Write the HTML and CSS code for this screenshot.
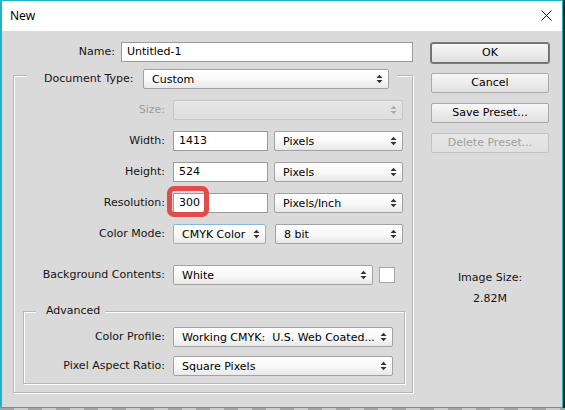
FILE: index.html
```html
<!DOCTYPE html>
<html>
<head>
<meta charset="utf-8">
<link rel="stylesheet" href="styles.css">
</head>
<body>
<div class="screen">
  <div class="window">
    <div class="titlebar">
      <span class="title">New</span>
      <svg class="close" width="11" height="11" viewBox="0 0 11 11"><path d="M0.5 0.5 L10.5 10.5 M10.5 0.5 L0.5 10.5" stroke="#111" stroke-width="1" fill="none"/></svg>
    </div>
    <div class="dialog">
      <div class="form">
        <div class="name-row">
          <span class="lbl name-lbl">Name:</span>
          <div class="field name-field">Untitled-1</div>
        </div>
        <div class="group outer">
          <div class="group-head doc-head">
            <span class="lbl doc-lbl">Document Type:</span>
            <div class="select doc-select"><span>Custom</span><svg class="arr" width="7" height="10" viewBox="0 0 7 10"><path d="M0.5 4 L3.5 0.8 L6.5 4 Z M0.5 6 L3.5 9.2 L6.5 6 Z" fill="#333"/></svg></div>
          </div>
          <div class="rows">
            <div class="row">
              <span class="lbl rl disabled">Size:</span>
              <div class="select off w230"><span></span><svg class="arr" width="7" height="10" viewBox="0 0 7 10"><path d="M0.5 4 L3.5 0.8 L6.5 4 Z M0.5 6 L3.5 9.2 L6.5 6 Z" fill="#aaa"/></svg></div>
            </div>
            <div class="row">
              <span class="lbl rl">Width:</span>
              <div class="field w95">1413</div>
              <div class="select w129"><span>Pixels</span><svg class="arr" width="7" height="10" viewBox="0 0 7 10"><path d="M0.5 4 L3.5 0.8 L6.5 4 Z M0.5 6 L3.5 9.2 L6.5 6 Z" fill="#333"/></svg></div>
            </div>
            <div class="row">
              <span class="lbl rl">Height:</span>
              <div class="field w95">524</div>
              <div class="select w129"><span>Pixels</span><svg class="arr" width="7" height="10" viewBox="0 0 7 10"><path d="M0.5 4 L3.5 0.8 L6.5 4 Z M0.5 6 L3.5 9.2 L6.5 6 Z" fill="#333"/></svg></div>
            </div>
            <div class="row">
              <span class="lbl rl">Resolution:</span>
              <div class="field w95 marked">300<span class="mark"></span></div>
              <div class="select w129"><span>Pixels/Inch</span><svg class="arr" width="7" height="10" viewBox="0 0 7 10"><path d="M0.5 4 L3.5 0.8 L6.5 4 Z M0.5 6 L3.5 9.2 L6.5 6 Z" fill="#333"/></svg></div>
            </div>
            <div class="row">
              <span class="lbl rl">Color Mode:</span>
              <div class="select focus w93"><span>CMYK Color</span><svg class="arr" width="7" height="10" viewBox="0 0 7 10"><path d="M0.5 4 L3.5 0.8 L6.5 4 Z M0.5 6 L3.5 9.2 L6.5 6 Z" fill="#333"/></svg></div>
              <div class="select w128 gap9"><span>8 bit</span><svg class="arr" width="7" height="10" viewBox="0 0 7 10"><path d="M0.5 4 L3.5 0.8 L6.5 4 Z M0.5 6 L3.5 9.2 L6.5 6 Z" fill="#333"/></svg></div>
            </div>
            <div class="row bg-row">
              <span class="lbl rl">Background Contents:</span>
              <div class="select w200"><span>White</span><svg class="arr" width="7" height="10" viewBox="0 0 7 10"><path d="M0.5 4 L3.5 0.8 L6.5 4 Z M0.5 6 L3.5 9.2 L6.5 6 Z" fill="#333"/></svg></div>
              <div class="swatch"></div>
            </div>
          </div>
          <div class="group adv">
            <div class="group-head adv-head"><span class="lbl">Advanced</span></div>
            <div class="rows adv-rows">
              <div class="row">
                <span class="lbl rl2">Color Profile:</span>
                <div class="select w220"><span>Working CMYK:&nbsp; U.S. Web Coated...</span><svg class="arr" width="7" height="10" viewBox="0 0 7 10"><path d="M0.5 4 L3.5 0.8 L6.5 4 Z M0.5 6 L3.5 9.2 L6.5 6 Z" fill="#333"/></svg></div>
              </div>
              <div class="row">
                <span class="lbl rl2">Pixel Aspect Ratio:</span>
                <div class="select w220"><span>Square Pixels</span><svg class="arr" width="7" height="10" viewBox="0 0 7 10"><path d="M0.5 4 L3.5 0.8 L6.5 4 Z M0.5 6 L3.5 9.2 L6.5 6 Z" fill="#333"/></svg></div>
              </div>
            </div>
          </div>
        </div>
      </div>
      <div class="side">
        <div class="btn default">OK</div>
        <div class="btn">Cancel</div>
        <div class="btn">Save Preset...</div>
        <div class="btn disabled-btn">Delete Preset...</div>
        <div class="info">
          <div class="info-line">Image Size:</div>
          <div class="info-line">2.82M</div>
        </div>
      </div>
    </div>
  </div>
  <div class="desk-right"></div>
</div>
<div class="desk-strip"></div>
</body>
</html>
```
FILE: styles.css
```css
html, body {
  margin: 0;
  padding: 0;
  background: #1e1e1e;
}
body {
  width: 565px;
  height: 410px;
  overflow: hidden;
  font-family: "DejaVu Sans", sans-serif;
  font-size: 11px;
  color: #141414;
}
.screen {
  display: flex;
}
.window {
  width: 563px;
  height: 408px;
  box-sizing: border-box;
  border: 1px solid #1fb3c3;
  border-left-width: 2px;
  background: #dadada;
  display: flex;
  flex-direction: column;
}
.desk-right {
  width: 2px;
  background: #1e1e1e;
}
.desk-strip {
  height: 2px;
  background: repeating-linear-gradient(90deg, #a3a3a3 0 14px, #cbcbcb 14px 28px);
}
.titlebar {
  height: 30px;
  background: #fff;
  display: flex;
  align-items: center;
  justify-content: space-between;
  padding: 0 10px 0 8px;
}
.title {
  font-family: "Noto Sans", sans-serif;
  font-size: 12px;
  color: #000;
  margin-top: -1px;
}
.close {
  display: block;
  margin-top: -2px;
}
.dialog {
  flex: 1;
  display: flex;
  padding: 11px 0 0 11px;
}
.form {
  width: 400px;
}
.side {
  width: 120px;
  margin-left: 17px;
  display: flex;
  flex-direction: column;
  align-items: center;
}
.lbl {
  white-space: nowrap;
  line-height: 20px;
}
.name-row {
  display: flex;
  height: 20px;
}
.name-lbl {
  width: 102px;
  text-align: right;
  margin-right: 6px;
}
.field {
  box-sizing: border-box;
  height: 20px;
  background: #fff;
  border: 1px solid #9a9a9a;
  padding-left: 5px;
  line-height: 18px;
  color: #000;
  position: relative;
}
.name-field {
  flex: 1;
}
.group {
  border: 1px solid #b6b6b6;
  box-shadow: inset 1px 1px 0 #fff, 1px 1px 0 #fff;
}
.outer {
  margin-top: 13px;
  width: 398px;
  padding-bottom: 8px;
}
.group-head {
  display: flex;
  align-items: center;
  background: #dadada;
  width: fit-content;
}
.doc-head {
  margin: -7px 0 0 13px;
  padding: 0 8px 0 17px;
  height: 20px;
}
.doc-lbl {
  width: 93px;
  margin-right: 6px;
}
.doc-select {
  width: 246px;
}
.rows {
  display: flex;
  flex-direction: column;
  gap: 11px;
  margin-top: 11px;
}
.row {
  display: flex;
  align-items: center;
  height: 20px;
}
.bg-row {
  margin-top: 10px;
}
.rl {
  width: 151px;
  padding-right: 8px;
  text-align: right;
}
.rl2 {
  width: 141px;
  padding-right: 8px;
  text-align: right;
}
.disabled {
  color: #9c9c9c;
}
.select {
  box-sizing: border-box;
  height: 20px;
  border: 1px solid #a2a2a2;
  border-radius: 2px;
  background: linear-gradient(#ffffff, #f8f8f8 55%, #e8e8e8);
  display: flex;
  align-items: center;
  justify-content: space-between;
  padding: 0 5px 0 8px;
  color: #000;
  white-space: nowrap;
  overflow: hidden;
}
.select + .select,
.field + .select {
  margin-left: 6px;
}
.select.gap9 {
  margin-left: 9px;
}
.select.off {
  background: linear-gradient(#e6e6e6, #dedede);
  border-color: #c6c6c6;
}
.select.focus {
  border-color: #86b6e6;
}
.arr {
  display: block;
  flex: none;
}
.w230 { width: 230px; }
.w95 { width: 95px; }
.w129 { width: 129px; }
.w128 { width: 128px; }
.w93 { width: 93px; }
.w200 { width: 200px; }
.w220 { width: 220px; }
.mark {
  position: absolute;
  left: -7px;
  top: -8px;
  width: 42px;
  height: 31px;
  box-sizing: border-box;
  border: 5px solid #e24b4b;
  border-radius: 7px;
}
.swatch {
  width: 16px;
  height: 16px;
  box-sizing: border-box;
  background: #fff;
  border: 1px solid #a8a8a8;
  margin-left: 6px;
}
.adv {
  margin: 26px 7px 0 9px;
  padding-bottom: 7px;
}
.adv-head {
  margin: -9px 0 0 12px;
  padding: 0 5px 0 10px;
  height: 16px;
}
.adv-head .lbl {
  line-height: 16px;
}
.adv-rows {
  margin-top: 8px;
  gap: 9px;
}
.btn {
  box-sizing: border-box;
  width: 118px;
  height: 20px;
  border: 1px solid #a9a9a9;
  border-radius: 2px;
  background: linear-gradient(#f7f7f7, #ececec 50%, #e0e0e0);
  text-align: center;
  line-height: 18px;
  color: #000;
  margin-top: 10px;
}
.btn.default {
  margin-top: 1px;
  border-color: #707070;
  box-shadow: 0 0 0 1px #7a7a7a;
}
.btn.disabled-btn {
  color: #a0a0a0;
  border-color: #c2c2c2;
  background: linear-gradient(#e8e8e8, #e0e0e0);
}
.info {
  margin-top: 117px;
  text-align: center;
}
.info-line {
  line-height: 16px;
  margin-bottom: 5px;
}
```
